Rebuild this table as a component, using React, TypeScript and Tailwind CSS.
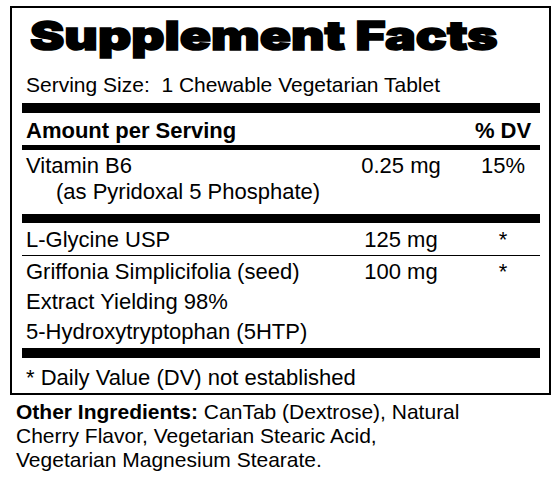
const cols = "grid grid-cols-[1fr_100px_74px] gap-x-[15px]";

export default function App() {
  return (
    <div className="w-[558px] h-[480px] bg-white text-black font-['Liberation_Sans',Arial,sans-serif] overflow-hidden">
      {/* label box */}
      <div className="ml-[10px] mt-[6px] w-[541px] border-2 border-black pl-[10px] pr-[9px] pb-[2px]">
        <h1 className="h-[64px] pl-[8px] leading-[55px] text-[40px] font-black font-['Inter',sans-serif] whitespace-nowrap">
          <span className="inline-block origin-left scale-x-[1.29] tracking-[0px] [-webkit-text-stroke:1.5px_black]">
            Supplement Facts
          </span>
        </h1>
        <p className="pl-[4px] text-[21px] leading-[26px]">
          Serving Size:&nbsp; 1 Chewable Vegetarian Tablet
        </p>
        <div className="mt-[5px] h-[10px] bg-black" />

        <div className={`${cols} pt-[3px] text-[22px] font-bold leading-[29px]`}>
          <div className="pl-[4px]">Amount per Serving</div>
          <div />
          <div className="text-center">% DV</div>
        </div>
        <div className="h-[5px] bg-black" />

        {/* Vitamin B6 */}
        <div className={`${cols} pt-[3px] pb-[9px] text-[22px] leading-[26px]`}>
          <div className="pl-[4px]">
            Vitamin B6
            <div className="pl-[30px]">(as Pyridoxal 5 Phosphate)</div>
          </div>
          <div className="text-center">0.25 mg</div>
          <div className="text-center">15%</div>
        </div>
        <div className="h-[9px] bg-black" />

        <div className={`${cols} pt-[1px] text-[22px] leading-[31px] border-b border-black`}>
          <div className="pl-[4px]">L-Glycine USP</div>
          <div className="text-center">125 mg</div>
          <div className="text-center">*</div>
        </div>

        <div className={`${cols} pt-[1px] pb-[1px] text-[22px] leading-[30px]`}>
          <div className="pl-[4px]">
            Griffonia Simplicifolia (seed)
            <br />
            Extract Yielding 98%
            <br />
            5-Hydroxytryptophan (5HTP)
          </div>
          <div className="text-center">100 mg</div>
          <div className="text-center">*</div>
        </div>
        <div className="h-[10px] bg-black" />

        <p className="pl-[4px] pt-[7px] text-[22px] leading-[26px]">* Daily Value (DV) not established</p>
      </div>

      <p className="ml-[16px] mt-[5px] text-[21px] leading-[24px]">
        <span className="font-bold">Other Ingredients:</span> CanTab (Dextrose), Natural
        <br />
        Cherry Flavor, Vegetarian Stearic Acid,
        <br />
        Vegetarian Magnesium Stearate.
      </p>
    </div>
  );
}
